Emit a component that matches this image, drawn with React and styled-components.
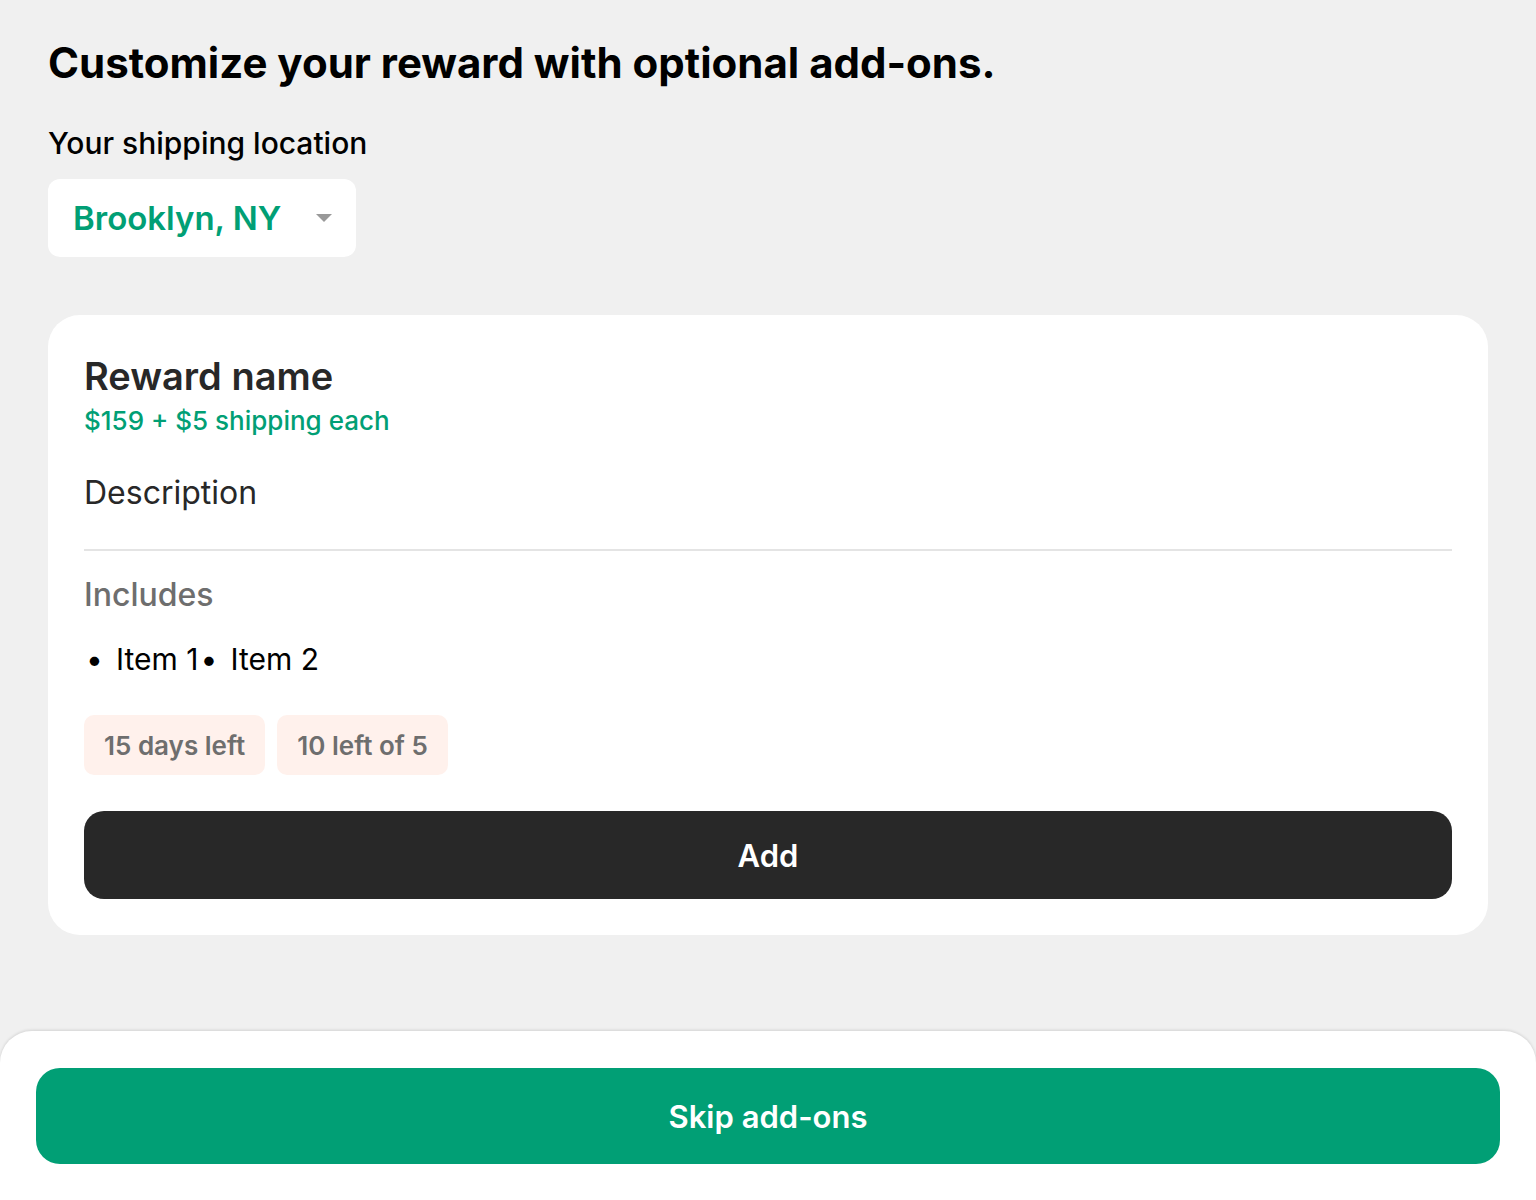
import React from "react";
import styled, { createGlobalStyle } from "styled-components";

const GlobalStyle = createGlobalStyle`
    html, body {
        margin: 0;
        padding: 0;
        background: #f0f0f0;
        font-family: Inter, "Noto Sans", "Liberation Sans", sans-serif;
    }
    * { box-sizing: border-box; }
`

const Page = styled.div`
    min-height: 100vh;
    display: flex;
    flex-direction: column;
`
const Content = styled.div`
    padding: 36px 48px 0;
`
const Title = styled.h1`
    margin: 0;
    font-size: 42px;
    line-height: 54px;
    font-weight: 700;
    color: #000;
`
const Label = styled.div`
    margin-top: 35px;
    font-size: 30px;
    line-height: 36px;
    font-weight: 500;
    color: #000;
`
const Location = styled.button`
    margin-top: 18px;
    display: flex;
    align-items: center;
    gap: 35px;
    height: 78px;
    padding: 0 24px 0 25px;
    background: #fff;
    border: none;
    border-radius: 12px;
    font-family: inherit;
    font-size: 33px;
    font-weight: 600;
    color: #019f75;
    cursor: pointer;
`
const Caret = styled.span`
    width: 0;
    height: 0;
    border-left: 8px solid transparent;
    border-right: 8px solid transparent;
    border-top: 8px solid #999;
`
const Card = styled.div`
    margin-top: 58px;
    background: #fff;
    border-radius: 32px;
    padding: 37px 36px 36px;
`
const RewardName = styled.h2`
    margin: 0;
    font-size: 38px;
    line-height: 48px;
    font-weight: 600;
    color: #282828;
`
const Price = styled.div`
    margin-top: 4px;
    font-size: 26px;
    line-height: 34px;
    font-weight: 500;
    color: #019f75;
`
const Description = styled.p`
    margin: 35px 0 0;
    font-size: 32px;
    line-height: 40px;
    font-weight: 400;
    color: #282828;
`
const Divider = styled.hr`
    margin: 36px 0 0;
    border: none;
    border-top: 2px solid #e4e4e4;
`
const SectionTitle = styled.div`
    margin-top: 24px;
    font-size: 32px;
    line-height: 40px;
    font-weight: 500;
    color: #6e6e6e;
`
const Items = styled.div`
    margin-top: 24px;
    display: flex;
    font-size: 30px;
    line-height: 40px;
    color: #000;
`
const Item = styled.span`
    &::before {
        content: "•";
        display: inline-block;
        width: 30px;
        text-align: left;
        padding-left: 2px;
    }
`
const Badges = styled.div`
    margin-top: 36px;
    display: flex;
    gap: 12px;
`
const Badge = styled.span`
    display: inline-flex;
    align-items: center;
    height: 60px;
    padding: 0 20px;
    background: #fff1ec;
    border-radius: 10px;
    font-size: 26px;
    font-weight: 600;
    color: #6e6e6e;
`
const Button = styled.button`
    width: 100%;
    border: none;
    font-family: inherit;
    font-weight: 600;
    color: #fff;
    cursor: pointer;
    background: ${(p) => (p.$green ? "#019f75" : "#282828")};
    height: ${(p) => (p.$green ? "96px" : "88px")};
    border-radius: ${(p) => (p.$green ? "24px" : "20px")};
    font-size: 31px;
`
const AddButton = styled(Button)`
    margin-top: 36px;
`
const Sheet = styled.div`
    margin-top: auto;
    background: #fff;
    border-radius: 32px 32px 0 0;
    box-shadow: 0 -1px 3px rgba(0, 0, 0, 0.12);
    padding: 37px 36px 36px;
`

const App = () => {
    const items = ["Item 1", "Item 2"];
    return (
        <Page>
            <GlobalStyle />
            <Content>
                <Title>Customize your reward with optional add-ons.</Title>
                <Label>Your shipping location</Label>
                <div>
                    <Location>
                        Brooklyn, NY
                        <Caret />
                    </Location>
                </div>
                <Card>
                    <RewardName>Reward name</RewardName>
                    <Price>$159 + $5 shipping each</Price>
                    <Description>Description</Description>
                    <Divider />
                    <SectionTitle>Includes</SectionTitle>
                    <Items>
                        {items.map((item) => (
                            <Item key={item}>{item}</Item>
                        ))}
                    </Items>
                    <Badges>
                        <Badge>15 days left</Badge>
                        <Badge>10 left of 5</Badge>
                    </Badges>
                    <AddButton>Add</AddButton>
                </Card>
            </Content>
            <Sheet>
                <Button $green>Skip add-ons</Button>
            </Sheet>
        </Page>
    );
}

export default App;
